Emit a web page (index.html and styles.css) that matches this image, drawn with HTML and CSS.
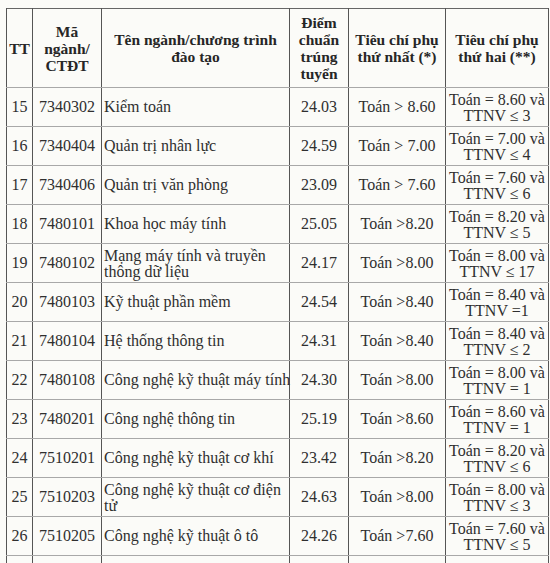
FILE: index.html
```html
<!DOCTYPE html>
<html lang="vi">
<head>
<meta charset="utf-8">
<title>Điểm chuẩn</title>
<link rel="stylesheet" href="styles.css">
</head>
<body>
<table class="grid">
  <colgroup>
    <col class="c-tt"><col class="c-code"><col class="c-name"><col class="c-score"><col class="c-crit1"><col class="c-crit2">
  </colgroup>
  <thead>
    <tr class="head">
      <th>TT</th>
      <th>Mã<br>ngành/<br>CTĐT</th>
      <th>Tên ngành/chương trình<br>đào tạo</th>
      <th>Điểm<br>chuẩn<br>trúng<br>tuyển</th>
      <th>Tiêu chí phụ<br>thứ nhất (*)</th>
      <th>Tiêu chí phụ<br>thứ hai (**)</th>
    </tr>
  </thead>
  <tbody>
    <tr><td>15</td><td>7340302</td><td class="name">Kiểm toán</td><td>24.03</td><td>Toán &gt; 8.60</td><td class="two">Toán = 8.60 và<br>TTNV ≤ 3</td></tr>
    <tr><td>16</td><td>7340404</td><td class="name">Quản trị nhân lực</td><td>24.59</td><td>Toán &gt; 7.00</td><td class="two">Toán = 7.00 và<br>TTNV ≤ 4</td></tr>
    <tr><td>17</td><td>7340406</td><td class="name">Quản trị văn phòng</td><td>23.09</td><td>Toán &gt; 7.60</td><td class="two">Toán = 7.60 và<br>TTNV ≤ 6</td></tr>
    <tr><td>18</td><td>7480101</td><td class="name">Khoa học máy tính</td><td>25.05</td><td>Toán &gt;8.20</td><td class="two">Toán = 8.20 và<br>TTNV ≤ 5</td></tr>
    <tr><td>19</td><td>7480102</td><td class="name two">Mạng máy tính và truyền<br>thông dữ liệu</td><td>24.17</td><td>Toán &gt;8.00</td><td class="two">Toán = 8.00 và<br>TTNV ≤ 17</td></tr>
    <tr><td>20</td><td>7480103</td><td class="name">Kỹ thuật phần mềm</td><td>24.54</td><td>Toán &gt;8.40</td><td class="two">Toán = 8.40 và<br>TTNV =1</td></tr>
    <tr><td>21</td><td>7480104</td><td class="name">Hệ thống thông tin</td><td>24.31</td><td>Toán &gt;8.40</td><td class="two">Toán = 8.40 và<br>TTNV ≤ 2</td></tr>
    <tr><td>22</td><td>7480108</td><td class="name">Công nghệ kỹ thuật máy tính</td><td>24.30</td><td>Toán &gt;8.00</td><td class="two">Toán = 8.00 và<br>TTNV = 1</td></tr>
    <tr><td>23</td><td>7480201</td><td class="name">Công nghệ thông tin</td><td>25.19</td><td>Toán &gt;8.60</td><td class="two">Toán = 8.60 và<br>TTNV = 1</td></tr>
    <tr><td>24</td><td>7510201</td><td class="name">Công nghệ kỹ thuật cơ khí</td><td>23.42</td><td>Toán &gt;8.20</td><td class="two">Toán = 8.20 và<br>TTNV ≤ 6</td></tr>
    <tr><td>25</td><td>7510203</td><td class="name two">Công nghệ kỹ thuật cơ điện<br>tử</td><td>24.63</td><td>Toán &gt;8.00</td><td class="two">Toán = 8.00 và<br>TTNV ≤ 3</td></tr>
    <tr><td>26</td><td>7510205</td><td class="name">Công nghệ kỹ thuật ô tô</td><td>24.26</td><td>Toán &gt;7.60</td><td class="two">Toán = 7.60 và<br>TTNV ≤ 5</td></tr>
    <tr class="cut"><td></td><td></td><td class="name"></td><td></td><td></td><td></td></tr>
  </tbody>
</table>
</body>
</html>
```

FILE: styles.css
```css
html, body {
  margin: 0;
  padding: 0;
  background: #fbfbf8;
  height: 563px;
  overflow: hidden;
}

body {
  padding: 8px 0 0 6px;
  font-family: "Liberation Serif", "DejaVu Serif", "Times New Roman", serif;
  color: #2f2f2f;
}

.grid {
  border-collapse: collapse;
  table-layout: fixed;
  width: 542px;
  border-top: 1px solid #666;
  font-family: "Liberation Serif", "DejaVu Serif", "Times New Roman", serif;
}

.c-tt { width: 26px; }
.c-code { width: 69px; }
.c-name { width: 188px; }
.c-score { width: 59px; }
.c-crit1 { width: 97px; }
.c-crit2 { width: 103px; }

.grid th,
.grid td {
  font-family: "Liberation Serif", "DejaVu Serif", "Times New Roman", serif;
  border-left: 1px solid #555;
  border-right: 1px solid #555;
  border-bottom: 1px solid #a8a8a8;
  padding: 0;
  text-align: center;
  vertical-align: middle;
}

.grid th {
  height: 78px;
  font-size: 15.5px;
  line-height: 17px;
  font-weight: bold;
  color: #262626;
}

.grid td {
  height: 37px;
  font-size: 16px;
  line-height: 16px;
  white-space: nowrap;
}

.grid td.name {
  text-align: left;
  padding-left: 2px;
}

.grid td.two {
  line-height: 16px;
  padding-top: 1px;
}

.grid tr.cut td {
  border-bottom: none;
}
```
